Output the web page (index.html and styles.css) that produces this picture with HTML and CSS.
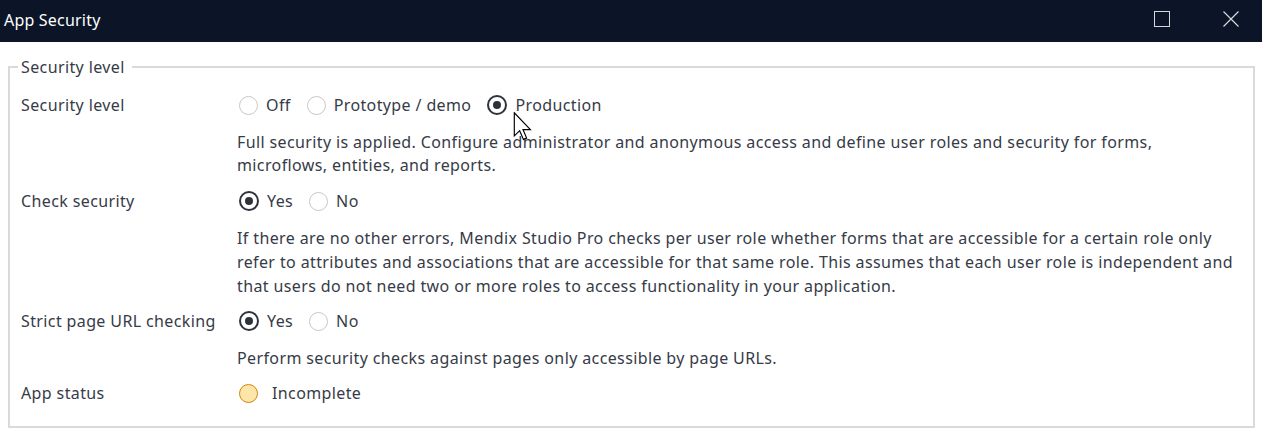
FILE: index.html
```html
<!DOCTYPE html>
<html>
<head>
<meta charset="utf-8">
<link rel="stylesheet" href="styles.css">
</head>
<body>
<div class="titlebar">
  <span class="title">App Security</span>
  <div class="winbtns">
    <span class="wbtn"><svg width="16" height="16" viewBox="0 0 16 16"><rect x="0.5" y="0.5" width="15" height="15" fill="none" stroke="#d6d8dc" stroke-width="1"/></svg></span>
    <span class="wbtn"><svg width="16" height="16" viewBox="0 0 16 16"><path d="M0.5 0.5 L15.5 15.5 M15.5 0.5 L0.5 15.5" stroke="#d6d8dc" stroke-width="1.2" fill="none"/></svg></span>
  </div>
</div>
<div class="content">
  <fieldset class="group">
    <legend>Security level</legend>
    <div class="row">
      <div class="label">Security level</div>
      <div class="field">
        <div class="options">
          <span class="opt"><span class="radio"></span>Off</span>
          <span class="opt"><span class="radio"></span>Prototype / demo</span>
          <span class="opt"><span class="radio checked"></span>Production</span>
        </div>
        <p class="desc first">Full security is applied. Configure administrator and anonymous access and define user roles and security for forms, microflows, entities, and reports.</p>
      </div>
    </div>
    <div class="row">
      <div class="label">Check security</div>
      <div class="field">
        <div class="options">
          <span class="opt"><span class="radio checked"></span>Yes</span>
          <span class="opt"><span class="radio"></span>No</span>
        </div>
        <p class="desc">If there are no other errors, Mendix Studio Pro checks per user role whether forms that are accessible for a certain role only refer to attributes and associations that are accessible for that same role. This assumes that each user role is independent and that users do not need two or more roles to access functionality in your application.</p>
      </div>
    </div>
    <div class="row">
      <div class="label">Strict page URL checking</div>
      <div class="field">
        <div class="options">
          <span class="opt"><span class="radio checked"></span>Yes</span>
          <span class="opt"><span class="radio"></span>No</span>
        </div>
        <p class="desc">Perform security checks against pages only accessible by page URLs.</p>
      </div>
    </div>
    <div class="row last">
      <div class="label">App status</div>
      <div class="field">
        <div class="options">
          <span class="opt status"><span class="dot"></span>Incomplete</span>
        </div>
      </div>
    </div>
  </fieldset>
</div>
<svg class="cursor" width="20" height="29" viewBox="0 0 13 20"><path d="M0.5 0.5 L0.5 16.5 L4.2 12.9 L6.8 18.9 L9 18 L6.5 12.1 L11.6 12.1 Z" fill="#fff" stroke="#000" stroke-width="0.8" stroke-linejoin="miter"/></svg>
</body>
</html>
```
FILE: styles.css
```css
html, body {
  margin: 0;
  padding: 0;
  background: #ffffff;
}
body {
  width: 1262px;
  height: 432px;
  overflow: hidden;
  position: relative;
  font-family: "Noto Sans", "Liberation Sans", sans-serif;
  font-size: 16px;
  letter-spacing: 0.38px;
  color: #363b47;
}
.titlebar {
  height: 42px;
  background: #0b1527;
  display: flex;
  align-items: center;
  justify-content: space-between;
}
.title {
  color: #ffffff;
  font-size: 16px;
  letter-spacing: 0.2px;
  padding-left: 4px;
  padding-bottom: 2px;
}
.winbtns {
  display: flex;
  align-items: center;
  gap: 53px;
  padding-right: 23px;
  padding-bottom: 4px;
}
.wbtn {
  display: flex;
}
.content {
  padding: 15px 7px 0 8px;
}
.group {
  margin: 0;
  border: 2px solid #dadada;
  padding: 3px 11px 21px 11px;
  min-width: 0;
}
.group legend {
  padding: 0 7px 0 3px;
  margin-left: -3px;
  line-height: 20px;
}
.row {
  display: grid;
  grid-template-columns: 216px 1fr;
  margin-bottom: 11px;
}
.row:first-of-type {
  margin-top: 13px;
}
.row.last {
  margin-bottom: 0;
}
.label {
  line-height: 24px;
}
.options {
  display: flex;
  align-items: center;
  height: 24px;
}
.opt {
  display: flex;
  align-items: center;
  margin-right: 14px;
  line-height: 24px;
}
.radio {
  width: 17px;
  height: 17px;
  border: 1.5px solid #c8c8c8;
  border-radius: 50%;
  margin: 0 8px 0 2px;
  box-sizing: content-box;
  position: relative;
}
.radio.checked {
  border: 2px solid #2e323c;
  width: 16px;
  height: 16px;
}
.radio.checked::after {
  content: "";
  position: absolute;
  left: 4px;
  top: 4px;
  width: 8px;
  height: 8px;
  border-radius: 50%;
  background: #2e323c;
}
.dot {
  width: 17px;
  height: 17px;
  border: 1.5px solid #d08607;
  background: #fee6ab;
  border-radius: 50%;
  margin: 0 14px 0 2px;
}
.desc {
  margin: 13px 0 0 0;
  line-height: 24px;
}
.desc.first {
  margin: 14px 0 1px 0;
  line-height: 23px;
}
.cursor {
  position: absolute;
  left: 513px;
  top: 112px;
}
```
